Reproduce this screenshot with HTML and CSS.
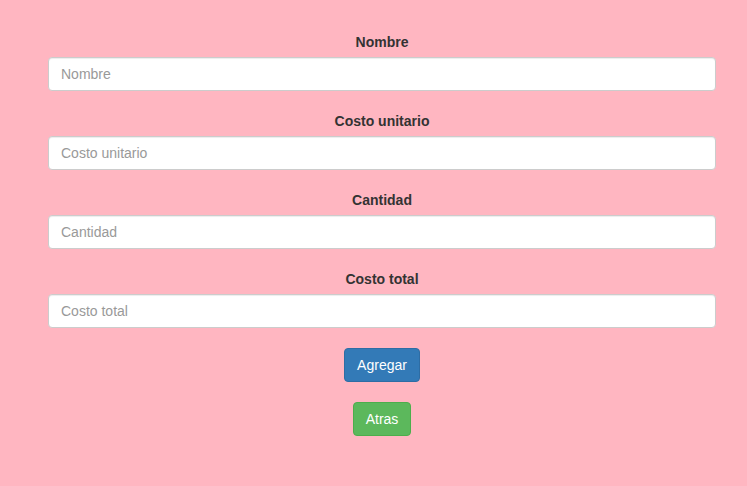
FILE: index.html
```html
<!DOCTYPE html>
<html>
<head>
<meta charset="utf-8">
<link rel="stylesheet" href="styles.css">
</head>
<body>
<form class="form">
  <div class="group">
    <label class="label">Nombre</label>
    <input class="input" type="text" placeholder="Nombre">
  </div>
  <div class="group">
    <label class="label">Costo unitario</label>
    <input class="input" type="text" placeholder="Costo unitario">
  </div>
  <div class="group">
    <label class="label">Cantidad</label>
    <input class="input" type="text" placeholder="Cantidad">
  </div>
  <div class="group">
    <label class="label">Costo total</label>
    <input class="input" type="text" placeholder="Costo total">
  </div>
  <div class="actions">
    <button type="button" class="btn btn-primary">Agregar</button>
    <button type="button" class="btn btn-success">Atras</button>
  </div>
</form>
</body>
</html>
```
FILE: styles.css
```css
html, body {
  margin: 0;
  padding: 0;
  background: #ffb6c1;
}
body {
  font-family: "Liberation Sans", Arial, sans-serif;
  font-size: 14px;
  line-height: 20px;
  color: #333;
}
.form {
  width: 668px;
  margin: 0 0 0 48px;
  padding-top: 32px;
  display: flex;
  flex-direction: column;
  gap: 20px;
}
.group {
  display: flex;
  flex-direction: column;
  align-items: stretch;
}
.label {
  display: block;
  text-align: center;
  font-weight: bold;
  margin-bottom: 5px;
}
.input {
  box-sizing: border-box;
  height: 34px;
  width: 100%;
  padding: 6px 12px;
  font-family: inherit;
  font-size: 14px;
  line-height: 20px;
  color: #555;
  background: #fff;
  border: 1px solid #ccc;
  border-radius: 4px;
  box-shadow: inset 0 1px 1px rgba(0,0,0,.075);
  outline: none;
}
.input::placeholder {
  color: #999;
}
.actions {
  display: flex;
  flex-direction: column;
  align-items: center;
  gap: 20px;
}
.btn {
  box-sizing: border-box;
  height: 34px;
  padding: 6px 12px;
  font-family: inherit;
  font-size: 14px;
  line-height: 20px;
  color: #fff;
  border: 1px solid transparent;
  border-radius: 4px;
  cursor: pointer;
}
.btn-primary {
  background: #337ab7;
  border-color: #2e6da4;
}
.btn-success {
  background: #5cb85c;
  border-color: #4cae4c;
}
```
